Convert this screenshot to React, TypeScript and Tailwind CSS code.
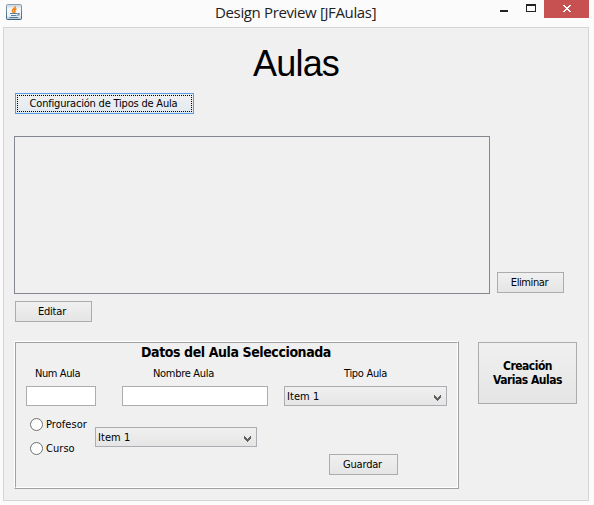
import type { ReactNode } from 'react';

const buttonStyle =
  'flex items-center justify-center border border-[#acacac] bg-linear-to-b from-[#f0f0f0] to-[#e5e5e5] whitespace-nowrap';

function JavaIcon() {
  return (
    <svg width="16" height="16" viewBox="0 0 16 16">
      <defs>
        <linearGradient id="tile" x1="0" y1="0" x2="0" y2="1">
          <stop offset="0" stopColor="#c3d0db" />
          <stop offset="0.3" stopColor="#f7f9fa" />
          <stop offset="0.75" stopColor="#eef2f5" />
          <stop offset="1" stopColor="#a9bccb" />
        </linearGradient>
        <linearGradient id="edge" x1="0" y1="0" x2="0" y2="1">
          <stop offset="0" stopColor="#8ba0b1" />
          <stop offset="1" stopColor="#3f6079" />
        </linearGradient>
      </defs>
      <rect x="0.5" y="0.5" width="15" height="15" rx="1" fill="url(#tile)" stroke="url(#edge)" />
      <path d="M9.3 2.4C9.6 4.5 6.2 5 6.4 6.7C6.5 7.6 7.4 8 7.5 8.8M10.5 4.8C8.5 5.6 8.3 6.3 8.9 7.2C9.3 7.8 8.8 8.4 8.4 8.8" fill="none" stroke="#ed8214" strokeWidth="1.6" />
      <path d="M4 9.5H11M5 11.5H10.5M3.5 13.5H12M11.5 9.5H13V11H11" fill="none" stroke="#54809f" strokeWidth="1.1" />
    </svg>
  );
}

function TitleBar() {
  return (
    <header className="flex h-[27px] items-start pl-[6px] pr-[5px]">
      <div className="mt-[4px]">
        <JavaIcon />
      </div>
      <h1 className="ml-[193px] mt-[2px] w-[170px] whitespace-nowrap font-['Open_Sans',sans-serif] text-[15px] leading-[21px] tracking-[-0.36px] text-[#222] [font-stretch:normal]">
        Design Preview [JFAulas]
      </h1>
      <div className="ml-auto flex items-start">
        <svg width="8" height="2" className="mt-[10px]" shapeRendering="crispEdges">
          <rect width="8" height="2" fill="#222" />
        </svg>
        <svg width="10" height="8" className="ml-[18px] mt-[4px]" shapeRendering="crispEdges">
          <path d="M0 0H10V8H0ZM1 2V7H9V2Z" fill="#222" fillRule="evenodd" />
        </svg>
        <div className="ml-[8px] flex h-[18px] w-[45px] justify-center bg-[#c75050] pt-[5px]">
          <svg width="8" height="7" viewBox="0 0 8 7" shapeRendering="crispEdges" className="ml-px">
            <path d="M0 0H2V1H3V2H5V1H6V0H8V1H7V2H6V3H5V4H6V5H7V6H8V7H6V6H5V5H3V6H2V7H0V6H1V5H2V4H3V3H2V2H1V1H0Z" fill="#fff" />
          </svg>
        </div>
      </div>
    </header>
  );
}

function Combo({ width }: { width: string }) {
  return (
    <div className={`flex h-5 ${width} items-center justify-between border border-[#acacb2] bg-linear-to-b from-[#f0f0f0] to-[#e5e5e5] pl-[2px] pr-[5px]`}>
      <span className="mt-px tracking-[0.05px]">Item 1</span>
      <svg width="7" height="6" viewBox="0 0 7 6" className="mt-[4px]" shapeRendering="crispEdges">
        <path d="M0 0H1V1H2V2H3V3H4V2H5V1H6V0H7V3H6V4H5V5H4V6H3V5H2V4H1V3H0Z" fill="#606060" />
      </svg>
    </div>
  );
}

function Radio({ children }: { children: ReactNode }) {
  return (
    <label className="flex h-[14px] items-center">
      <span className="h-[13px] w-[13px] rounded-full border border-[#707070] bg-white" />
      <span className="ml-[3px] mt-px whitespace-nowrap tracking-[0.05px]">{children}</span>
    </label>
  );
}

function RoomDetails() {
  return (
    <section className="h-[148px] w-[445px] border border-b-[#a0a0a0] border-l-white border-r-[#a0a0a0] border-t-white">
      <div className="flex h-full flex-col border border-b-white border-l-[#a0a0a0] border-r-white border-t-[#a0a0a0]">
        <h3 className="ml-[125px] mt-px h-[17px] whitespace-nowrap text-[14px] font-bold leading-[17px] tracking-[-0.41px]">
          Datos del Aula Seleccionada
        </h3>
        <div className="mt-[6px] flex h-[14px] whitespace-nowrap leading-[14px]">
          <span className="ml-[19px] w-[118px] tracking-[-0.4px]">Num Aula</span>
          <span className="w-[191px]">Nombre Aula</span>
          <span>Tipo Aula</span>
        </div>
        <div className="mt-[5px] flex pl-[10px]">
          <div className="h-5 w-[70px] border border-[#abadb3] bg-white" />
          <div className="ml-[26px] mr-4 h-5 w-[146px] border border-[#abadb3] bg-white" />
          <Combo width="w-[163px]" />
        </div>
        <div className="mt-[11px] flex pl-[14px]">
          <div className="flex w-[65px] flex-col gap-[10px]">
            <Radio>Profesor</Radio>
            <Radio>Curso</Radio>
          </div>
          <div className="mt-[10px]">
            <Combo width="w-[162px]" />
          </div>
          <button className={`${buttonStyle} ml-[72px] mt-[37px] h-[21px] w-[69px] pr-[2px] tracking-[-0.2px]`}>Guardar</button>
        </div>
      </div>
    </section>
  );
}

export default function App() {
  return (
    <div className="h-[505px] w-[594px] overflow-hidden bg-[#fbfbfb] font-['DejaVu_Sans_Condensed','DejaVu_Sans',sans-serif] text-[11px] leading-[14px] tracking-[-0.3px] text-black [font-stretch:condensed]">
      <TitleBar />
      <main className="ml-[3px] flex h-[474px] w-[586px] flex-col border border-[#d5d5d5] bg-[#f0f0f0] pl-[10px]">
        <h2 className="ml-[239px] mt-[15px] h-[41px] font-['Liberation_Sans',sans-serif] text-[36px] leading-[41px] tracking-[-0.8px]">
          Aulas
        </h2>
        <button className="ml-px mt-[9px] h-[21px] w-[179px] border border-[#569de5] bg-linear-to-b from-[#f0f0f0] to-[#e3eaf0] p-px tracking-[-0.2px]">
          <span className="flex h-full items-center justify-center whitespace-nowrap border border-dotted border-black pr-[2px]">
            Configuración de Tipos de Aula
          </span>
        </button>
        <div className="mt-[22px] flex items-end">
          <div className="h-[158px] w-[476px] border border-[#828790]" />
          <button className={`${buttonStyle} mb-px ml-[7px] h-[21px] w-[67px] pr-[2px] tracking-[-0.4px]`}>Eliminar</button>
        </div>
        <button className={`${buttonStyle} ml-px mt-[7px] h-[21px] w-[77px] pr-[3px] tracking-[-0.2px]`}>Editar</button>
        <div className="mt-[19px] flex">
          <RoomDetails />
          <button className={`${buttonStyle} ml-[19px] mt-px h-[62px] w-[99px] text-center text-[12px] font-bold leading-[14px] tracking-[-0.5px]`}>
            Creación
            <br />
            Varias Aulas
          </button>
        </div>
      </main>
    </div>
  );
}
